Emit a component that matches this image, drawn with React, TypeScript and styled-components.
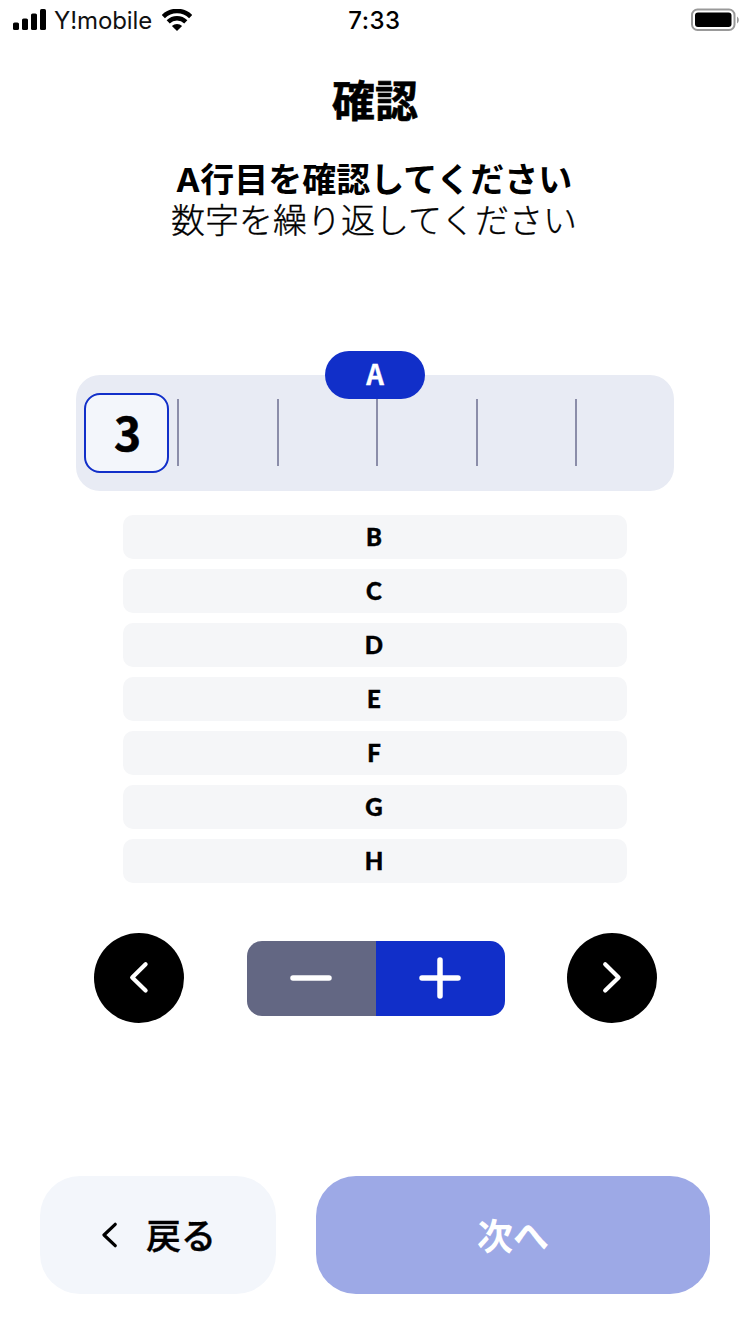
import React from 'react';
import styled, { createGlobalStyle } from 'styled-components';

const jp = `'Noto Sans CJK JP', sans-serif`;

const GlobalStyle = createGlobalStyle`
  *, *::before, *::after { box-sizing: border-box; }
  body { margin: 0; background: #fff; }
  button { border: 0; padding: 0; margin: 0; cursor: pointer; }
  svg { display: block; }
`;

const Screen = styled.div`
  width: 750px;
  height: 1334px;
  display: flex;
  flex-direction: column;
  background: #fff;
  color: #000;
  font-family: ${jp};
  overflow: hidden;
`;

const StatusBar = styled.header`
  flex: none;
  height: 40px;
  display: grid;
  grid-template-columns: 1fr 120px 1fr;
  align-items: center;
  padding: 0 11px 0 13px;
  font-family: Inter, sans-serif;
  font-size: 24px;
  line-height: 38px;
`;

const Carrier = styled.div`
  display: flex;
  align-items: center;
  gap: 7px;
`;

const CarrierName = styled.span`
  width: 101px;
  padding-top: 2px;
  white-space: nowrap;
  color: #111;
  letter-spacing: -0.1px;
`;

const Clock = styled.time`
  padding: 2px 3px 0 0;
  text-align: center;
  font-weight: 500;
  letter-spacing: 0.5px;
`;

const Battery = styled.div`
  justify-self: end;
`;

const Heading = styled.h1`
  flex: none;
  margin: 33px 0 0;
  height: 50px;
  line-height: 50px;
  text-align: center;
  font-size: 43px;
  font-weight: 700;
  -webkit-text-stroke: 0.6px #000;
`;

const Instructions = styled.div`
  flex: none;
  margin-top: 34px;
  padding-right: 2px;
  text-align: center;
  font-size: 34px;
`;

const Instruction = styled.p<{ $strong?: boolean }>`
  margin: 0;
  height: 41px;
  line-height: 41px;
  font-weight: ${p => (p.$strong ? 700 : 300)};
  -webkit-text-stroke: ${p => (p.$strong ? '0' : '0.35px #000')};
`;

const RowName = styled.span`
  font-family: Inter, sans-serif;
  font-size: 33px;
  line-height: 1;
`;

const ActiveRow = styled.section`
  position: relative;
  flex: none;
  width: 598px;
  height: 116px;
  margin: 136px 0 0 76px;
  border-radius: 24px;
  background: #e8ebf4;
  display: grid;
  grid-template-columns: 101px 100px 99px 100px 99px 1fr;
  align-items: start;
`;

const RowBadge = styled.div`
  position: absolute;
  top: -24px;
  left: 249px;
  width: 100px;
  height: 48px;
  border-radius: 24px;
  background: #112fc9;
  color: #fff;
  text-align: center;
  font-size: 27.5px;
  font-weight: 700;
  line-height: 44px;
  -webkit-text-stroke: 0.3px #fff;
`;

const Slot = styled.div`
  height: 67px;
  margin-top: 24px;
  border-left: 2px solid #8b8da9;
`;

const SelectedSlot = styled.div`
  width: 85px;
  height: 80px;
  margin: 18px 0 0 8px;
  padding-left: 2px;
  border: 2px solid #112fc9;
  border-radius: 16px;
  background: #f3f6fb;
  text-align: center;
  font-size: 46px;
  font-weight: 700;
  line-height: 72px;
  -webkit-text-stroke: 0.6px #000;
`;

const RowList = styled.ul`
  flex: none;
  list-style: none;
  width: 504px;
  margin: 24px 0 0 123px;
  padding: 0;
  display: flex;
  flex-direction: column;
  gap: 10px;
`;

const RowItem = styled.li`
  height: 44px;
  border-radius: 10px;
  background: #f5f6f8;
  padding-right: 2px;
  text-align: center;
  font-family: Lato, sans-serif;
  font-size: 24px;
  font-weight: 900;
  line-height: 43px;
  -webkit-text-stroke: 0.4px #000;
`;

const Controls = styled.div`
  flex: none;
  margin: 50px 93px 0 94px;
  height: 90px;
  display: flex;
  align-items: center;
  justify-content: space-between;
`;

const RoundButton = styled.button`
  width: 90px;
  height: 90px;
  border-radius: 50%;
  background: #000;
`;

const Stepper = styled.div`
  display: flex;
  height: 75px;
  border-radius: 15px;
  overflow: hidden;
`;

const StepButton = styled.button<{ $color: string }>`
  width: 129px;
  height: 75px;
  background: ${p => p.$color};
`;

const Footer = styled.footer`
  flex: none;
  margin: 153px 40px 0;
  display: flex;
  gap: 40px;
`;

const FooterButton = styled.button<{ $primary?: boolean }>`
  flex: ${p => (p.$primary ? '1' : '0 0 236px')};
  height: 118px;
  border-radius: 40px;
  display: flex;
  align-items: center;
  justify-content: ${p => (p.$primary ? 'center' : 'flex-start')};
  gap: 28px;
  padding-left: ${p => (p.$primary ? '0' : '62px')};
  background: ${p => (p.$primary ? '#9da9e6' : '#f3f6fb')};
  color: ${p => (p.$primary ? '#fff' : '#000')};
  font-family: ${jp};
  font-size: ${p => (p.$primary ? '36px' : '35px')};
  font-weight: ${p => (p.$primary ? 700 : 500)};
  line-height: 50px;
`;

const FooterLabel = styled.span<{ $stroke: string }>`
  padding-bottom: 3px;
  -webkit-text-stroke: ${p => p.$stroke};
`;

const rows = ['B', 'C', 'D', 'E', 'F', 'G', 'H'];

const stroke = { fill: 'none', strokeLinecap: 'round', strokeLinejoin: 'round' } as const;

export default function App() {
  return (
    <>
      <GlobalStyle />
      <Screen lang="ja">
        <StatusBar>
          <Carrier>
            <svg width="34" height="22" viewBox="0 0 34 22">
              <rect x="0" y="13.5" width="6" height="7.5" rx="1.6" />
              <rect x="9" y="9.5" width="6" height="11.5" rx="1.6" />
              <rect x="18" y="4.5" width="6" height="16.5" rx="1.6" />
              <rect x="27" y="0" width="6" height="21" rx="1.6" />
            </svg>
            <CarrierName>Y!mobile</CarrierName>
            <svg width="30" height="22" viewBox="0 0 30 22">
              <path d="M1.3 7.6a19.5 19.5 0 0 1 27.4 0" fill="none" stroke="#000" strokeWidth="4.6" />
              <path d="M6.2 12.9a12.5 12.5 0 0 1 17.6 0" fill="none" stroke="#000" strokeWidth="4.4" />
              <path d="M9.9 17a7.4 7.4 0 0 1 10.2 0L15 22z" />
            </svg>
          </Carrier>
          <Clock>7:33</Clock>
          <Battery>
            <svg width="48" height="24" viewBox="0 0 48 24">
              <rect x="1" y="1.5" width="42.5" height="20.5" rx="5.5" fill="none" stroke="#999" strokeWidth="2" />
              <rect x="4" y="4.5" width="36.5" height="14.5" rx="3" />
              <path d="M46 8.5c2.4 1.6 2.4 5.4 0 7z" fill="#999" />
            </svg>
          </Battery>
        </StatusBar>

        <Heading>確認</Heading>
        <Instructions>
          <Instruction $strong>
            <RowName>A</RowName>行目を確認してください
          </Instruction>
          <Instruction>数字を繰り返してください</Instruction>
        </Instructions>

        <ActiveRow>
          <SelectedSlot>3</SelectedSlot>
          <Slot />
          <Slot />
          <Slot />
          <Slot />
          <Slot />
          <RowBadge>A</RowBadge>
        </ActiveRow>

        <RowList>
          {rows.map(name => (
            <RowItem key={name}>{name}</RowItem>
          ))}
        </RowList>

        <Controls>
          <RoundButton aria-label="前へ">
            <svg width="90" height="90" viewBox="0 0 90 90">
              <path d="M51.6 31.3L38.2 44.5L51.6 57.6" {...stroke} stroke="#fff" strokeWidth="4.2" />
            </svg>
          </RoundButton>
          <Stepper>
            <StepButton $color="#636783" aria-label="減らす">
              <svg width="129" height="75" viewBox="0 0 129 75">
                <path d="M46 37H82" {...stroke} stroke="#fff" strokeWidth="5.5" />
              </svg>
            </StepButton>
            <StepButton $color="#112fc9" aria-label="増やす">
              <svg width="129" height="75" viewBox="0 0 129 75">
                <path d="M46 37H82M64 19V55" {...stroke} stroke="#fff" strokeWidth="5.5" />
              </svg>
            </StepButton>
          </Stepper>
          <RoundButton aria-label="次へ">
            <svg width="90" height="90" viewBox="0 0 90 90">
              <path d="M38.2 31.3L51.6 44.5L38.2 57.6" {...stroke} stroke="#fff" strokeWidth="4.2" />
            </svg>
          </RoundButton>
        </Controls>

        <Footer>
          <FooterButton>
            <svg width="16" height="26" viewBox="0 0 16 26">
              <path d="M13.2 2.3L2 13L13.2 23.7" {...stroke} stroke="#000" strokeWidth="3.2" />
            </svg>
            <FooterLabel $stroke="0.4px #000">戻る</FooterLabel>
          </FooterButton>
          <FooterButton $primary>
            <FooterLabel $stroke="0">次へ</FooterLabel>
          </FooterButton>
        </Footer>
      </Screen>
    </>
  );
}
